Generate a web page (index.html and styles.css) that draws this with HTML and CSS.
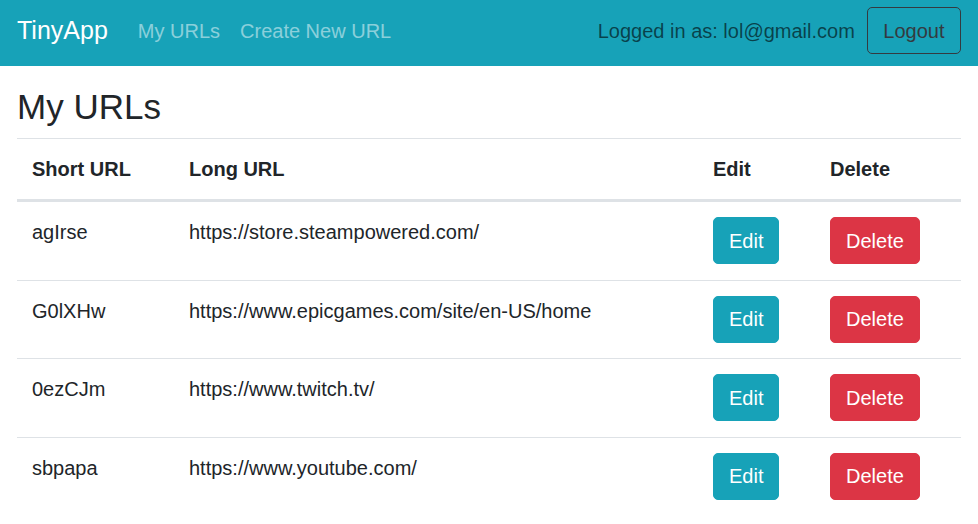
FILE: index.html
```html
<!DOCTYPE html>
<html lang="en">
<head>
<meta charset="utf-8">
<title>TinyApp</title>
<link rel="stylesheet" href="styles.css">
</head>
<body>
<nav class="navbar">
  <a class="brand" href="#">TinyApp</a>
  <div class="nav-links">
    <a class="nav-link" href="#">My URLs</a>
    <a class="nav-link" href="#">Create New URL</a>
  </div>
  <div class="nav-right">
    <span class="nav-text">Logged in as: lol@gmail.com</span>
    <button class="btn btn-outline-dark" type="button">Logout</button>
  </div>
</nav>
<main class="container">
  <h3 class="title">My URLs</h3>
  <table class="table">
    <colgroup>
      <col class="c-short">
      <col class="c-long">
      <col class="c-edit">
      <col class="c-del">
    </colgroup>
    <thead>
      <tr><th>Short URL</th><th>Long URL</th><th>Edit</th><th>Delete</th></tr>
    </thead>
    <tbody>
      <tr>
        <td>agIrse</td><td>https://store.steampowered.com/</td>
        <td><button class="btn btn-info" type="button">Edit</button></td>
        <td><button class="btn btn-danger" type="button">Delete</button></td>
      </tr>
      <tr>
        <td>G0lXHw</td><td>https://www.epicgames.com/site/en-US/home</td>
        <td><button class="btn btn-info" type="button">Edit</button></td>
        <td><button class="btn btn-danger" type="button">Delete</button></td>
      </tr>
      <tr>
        <td>0ezCJm</td><td>https://www.twitch.tv/</td>
        <td><button class="btn btn-info" type="button">Edit</button></td>
        <td><button class="btn btn-danger" type="button">Delete</button></td>
      </tr>
      <tr>
        <td>sbpapa</td><td>https://www.youtube.com/</td>
        <td><button class="btn btn-info" type="button">Edit</button></td>
        <td><button class="btn btn-danger" type="button">Delete</button></td>
      </tr>
    </tbody>
  </table>
</main>
</body>
</html>
```
FILE: styles.css
```css
* { box-sizing: border-box; }
html, body { margin: 0; padding: 0; }
body {
  font-family: "Liberation Sans", Arial, sans-serif;
  font-size: 20px;
  line-height: 1.5;
  color: #212529;
  background: #fff;
}
a { text-decoration: none; }

.navbar {
  display: flex;
  align-items: center;
  height: 66px;
  padding: 7px 17px 12px 17px;
  background: #17a2b8;
}
.brand {
  color: #fff;
  font-size: 25px;
  line-height: 37px;
  margin-right: 20px;
}
.nav-links { display: flex; }
.nav-link {
  color: rgba(255, 255, 255, 0.5);
  padding: 0 10px;
  line-height: 30px;
}
.nav-right {
  margin-left: auto;
  display: flex;
  align-items: center;
  gap: 12px;
}
.nav-text { color: rgba(0, 0, 0, 0.6); }

.btn {
  font-family: inherit;
  font-size: 20px;
  line-height: 30px;
  padding: 7.5px 15px;
  border: 1px solid transparent;
  border-radius: 5px;
  cursor: pointer;
}
.btn-outline-dark {
  background: transparent;
  color: #343a40;
  border-color: #343a40;
  padding: 7.5px 15.5px;
}
.btn-info { background: #17a2b8; border-color: #17a2b8; color: #fff; }
.btn-danger { background: #dc3545; border-color: #dc3545; color: #fff; }

.container { padding: 0 17px; }
.title {
  font-size: 35px;
  font-weight: 500;
  line-height: 1.2;
  margin: 20px 0 10px;
}
.table {
  width: 100%;
  border-collapse: collapse;
  table-layout: fixed;
}
.c-short { width: 157px; }
.c-edit { width: 117px; }
.c-del { width: 146px; }
.table th, .table td {
  text-align: left;
  vertical-align: top;
  padding: 15px;
  border-top: 1px solid #dee2e6;
}
.table td { padding-bottom: 15.5px; white-space: nowrap; }
.table th { font-weight: 700; }
.table thead th {
  border-bottom: 3px solid #dee2e6;
  vertical-align: bottom;
}
```
